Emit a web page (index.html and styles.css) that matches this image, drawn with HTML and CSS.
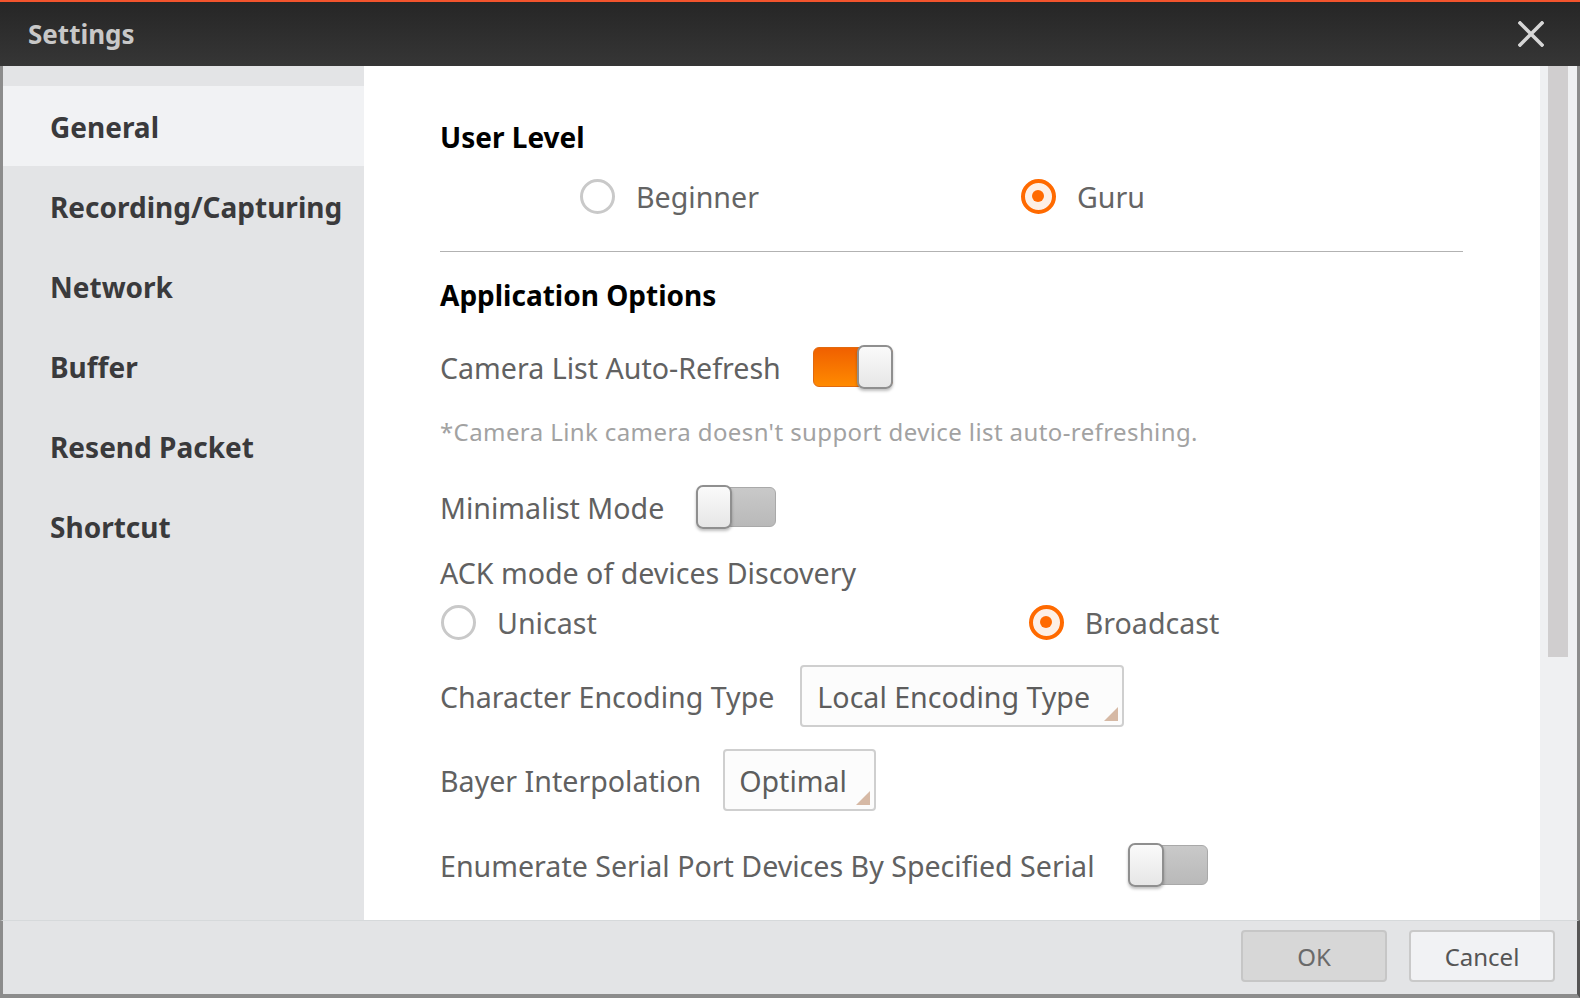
FILE: index.html
```html
<!DOCTYPE html>
<html>
<head>
<meta charset="utf-8">
<title>Settings</title>
<link rel="stylesheet" href="styles.css">
</head>
<body>
<div class="window">
  <header class="titlebar">
    <span class="title">Settings</span>
    <svg class="close" width="26" height="26" viewBox="0 0 26 26"><path d="M2 2 L24 24 M24 2 L2 24" stroke="#d6d6d6" stroke-width="3.6" stroke-linecap="square"/></svg>
  </header>
  <div class="body">
    <nav class="sidebar">
      <div class="nav-item active">General</div>
      <div class="nav-item">Recording/Capturing</div>
      <div class="nav-item">Network</div>
      <div class="nav-item">Buffer</div>
      <div class="nav-item">Resend Packet</div>
      <div class="nav-item">Shortcut</div>
    </nav>
    <main class="content">
      <div class="row heading h-user">User Level</div>
      <div class="row radios r-level">
        <label class="radio beginner"><span class="dot"></span><span class="rlabel">Beginner</span></label>
        <label class="radio guru checked"><span class="dot"></span><span class="rlabel">Guru</span></label>
      </div>
      <div class="divider"></div>
      <div class="row heading h-app">Application Options</div>
      <div class="row r-camera">
        <span class="label">Camera List Auto-Refresh</span>
        <span class="toggle on"><span class="knob"></span></span>
      </div>
      <div class="row note">*Camera Link camera doesn't support device list auto-refreshing.</div>
      <div class="row r-mini">
        <span class="label">Minimalist Mode</span>
        <span class="toggle off"><span class="knob"></span></span>
      </div>
      <div class="row r-ack"><span class="label">ACK mode of devices Discovery</span></div>
      <div class="row radios r-cast">
        <label class="radio unicast"><span class="dot"></span><span class="rlabel">Unicast</span></label>
        <label class="radio broadcast checked"><span class="dot"></span><span class="rlabel">Broadcast</span></label>
      </div>
      <div class="row r-enc">
        <span class="label">Character Encoding Type</span>
        <span class="select sel-enc">Local Encoding Type<span class="corner"></span></span>
      </div>
      <div class="row r-bayer">
        <span class="label">Bayer Interpolation</span>
        <span class="select sel-bayer">Optimal<span class="corner"></span></span>
      </div>
      <div class="row r-serial">
        <span class="label">Enumerate Serial Port Devices By Specified Serial</span>
        <span class="toggle off"><span class="knob"></span></span>
      </div>
    </main>
    <div class="scrollbar"><div class="thumb"></div></div>
  </div>
  <footer class="footer">
    <button class="btn ok">OK</button>
    <button class="btn cancel">Cancel</button>
  </footer>
</div>
</body>
</html>
```

FILE: styles.css
```css
* { box-sizing: border-box; }
html, body { margin: 0; padding: 0; }
body {
  width: 1580px;
  height: 998px;
  overflow: hidden;
  font-family: "Noto Sans", "Open Sans", sans-serif;
  background: #ffffff;
}
.window {
  display: flex;
  flex-direction: column;
  width: 1580px;
  height: 998px;
}
.titlebar {
  height: 66px;
  flex: none;
  display: flex;
  align-items: center;
  justify-content: space-between;
  padding: 0 36px 0 28px;
  border-top: 2px solid #f2542d;
  background: linear-gradient(#262626, #363636);
}
.title {
  color: #c8c8c8;
  font-weight: 700;
  font-size: 26px;
  margin-top: 0;
}
.close { display: block; }

.body {
  flex: 1;
  display: flex;
  min-height: 0;
  border-left: 3px solid #8c8c8c;
  border-right: 3px solid #8c8c8c;
}
.sidebar {
  width: 361px;
  flex: none;
  background: #e3e4e6;
  padding-top: 20px;
}
.nav-item {
  height: 80px;
  display: flex;
  align-items: center;
  padding: 2px 0 0 47px;
  font-weight: 700;
  font-size: 28px;
  color: #3a3a3c;
}
.nav-item.active { background: #f1f2f4; }

.content {
  flex: 1;
  background: #ffffff;
  padding: 41px 0 0 76px;
  color: #616161;
  font-size: 28.6px;
}
.row {
  display: flex;
  align-items: center;
}
.heading {
  color: #000;
  font-weight: 700;
  font-size: 28px;
}
.h-user { height: 60px; }
.r-level { height: 58px; }
.divider {
  margin-top: 26px;
  width: 1023px;
  height: 1px;
  background: #b2b2b2;
}
.h-app { margin-top: 17px; height: 52px; }
.r-camera { margin-top: 23px; height: 46px; }
.note {
  margin-top: 22px;
  height: 38px;
  font-size: 24px;
  letter-spacing: 0.4px;
  color: #a2a2a2;
  white-space: nowrap;
}
.r-mini { margin-top: 34px; height: 46px; }
.r-ack { margin-top: 20px; height: 44px; }
.r-cast { margin-top: 6px; height: 44px; }
.r-enc { margin-top: 21px; height: 62px; }
.r-bayer { margin-top: 22px; height: 62px; }
.r-serial { margin-top: 31px; height: 46px; }

.label { white-space: nowrap; }

.radio {
  display: flex;
  align-items: center;
  color: #646464;
}
.dot {
  width: 35px;
  height: 35px;
  border-radius: 50%;
  border: 3px solid #c9c9c9;
  background: #fff;
  flex: none;
  display: flex;
  align-items: center;
  justify-content: center;
}
.radio.checked .dot {
  border: 4px solid #ff6a00;
  background: #fdf0e6;
}
.radio.checked .dot::after {
  content: "";
  width: 12px;
  height: 12px;
  border-radius: 50%;
  background: #ff6a00;
}
.rlabel { margin-left: 21px; }
.beginner { margin-left: 140px; }
.guru { margin-left: 262px; }
.unicast { margin-left: 1px; }
.broadcast { margin-left: 432px; }

.toggle {
  position: relative;
  width: 80px;
  height: 40px;
  border-radius: 6px;
  display: flex;
  align-items: center;
  flex: none;
}
.r-camera .toggle { margin-left: 32px; }
.r-mini .toggle { margin-left: 32px; }
.r-serial .toggle { margin-left: 33px; }
.toggle.on {
  background: linear-gradient(#f06000, #ff8a00);
  border: 1px solid #e06a10;
  justify-content: flex-end;
}
.toggle.off {
  background: linear-gradient(#c9c9c9, #b9b9b9);
  border: 1px solid #a9a9a9;
  justify-content: flex-start;
}
.knob {
  width: 36px;
  height: 44px;
  border-radius: 7px;
  border: 2px solid #8f8f8f;
  background: linear-gradient(#fafafa, #e6e6e6);
  box-shadow: 0 2px 3px rgba(0,0,0,0.25);
  margin: 0 -1px;
}

.select {
  position: relative;
  height: 62px;
  display: flex;
  align-items: center;
  border: 2px solid #cfcfcf;
  border-radius: 4px;
  background: #fcfcfc;
  color: #5d5d5d;
  white-space: nowrap;
  overflow: hidden;
}
.sel-enc { width: 324px; margin-left: 26px; padding-left: 15px; }
.sel-bayer { width: 153px; margin-left: 22px; padding-left: 14px; }
.corner {
  position: absolute;
  right: 4px;
  bottom: 4px;
  width: 0;
  height: 0;
  border-left: 14px solid transparent;
  border-bottom: 14px solid #d6b9a5;
}

.scrollbar {
  width: 37px;
  flex: none;
  background: #eff0f2;
  padding-left: 8px;
}
.thumb {
  width: 20px;
  height: 591px;
  background: #d0cecf;
}

.footer {
  flex: none;
  height: 78px;
  background: #e3e4e6;
  border-top: 1px solid #d6d9db;
  border-left: 3px solid #8c8c8c;
  border-right: 3px solid #555;
  border-bottom: 4px solid #8c8c8c;
  display: flex;
  justify-content: flex-end;
  align-items: flex-start;
  padding: 9px 22px 0 0;
  gap: 22px;
}
.btn {
  width: 146px;
  height: 52px;
  border-radius: 4px;
  font-family: "Noto Sans", "Open Sans", sans-serif;
  font-size: 24px;
  padding: 0;
}
.ok {
  background: #d7d7d7;
  border: 2px solid #c6c6c6;
  color: #6a6a6a;
}
.cancel {
  background: #f1f2f4;
  border: 2px solid #c9c9c9;
  color: #555;
}
```
